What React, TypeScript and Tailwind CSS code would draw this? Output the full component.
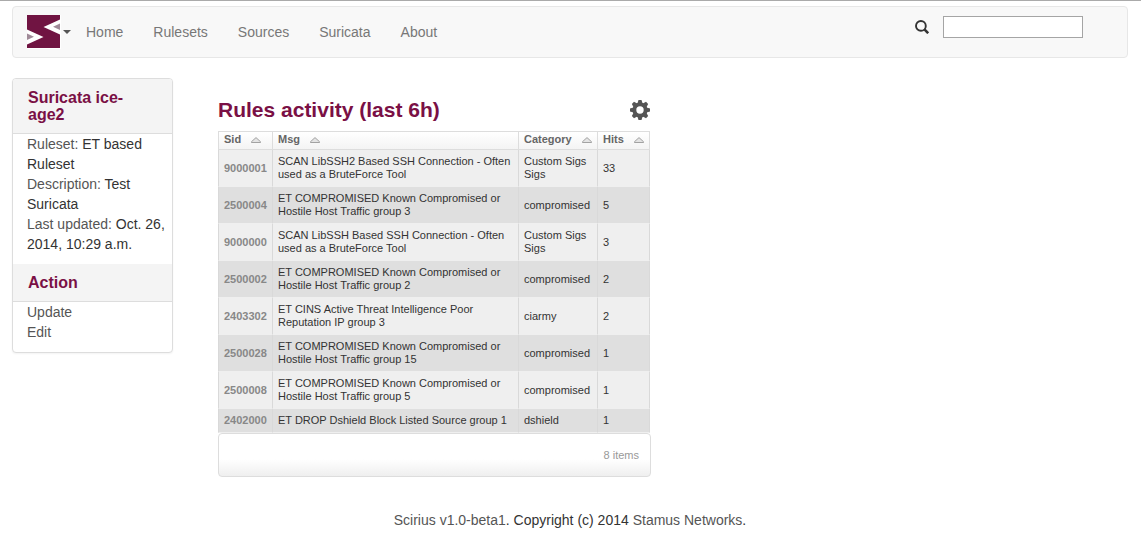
import React from "react";

type Rule = { sid: number; msg: string; category: string; hits: number };

const rules: Rule[] = [
  { sid: 9000001, msg: "SCAN LibSSH2 Based SSH Connection - Often used as a BruteForce Tool", category: "Custom Sigs Sigs", hits: 33 },
  { sid: 2500004, msg: "ET COMPROMISED Known Compromised or Hostile Host Traffic group 3", category: "compromised", hits: 5 },
  { sid: 9000000, msg: "SCAN LibSSH Based SSH Connection - Often used as a BruteForce Tool", category: "Custom Sigs Sigs", hits: 3 },
  { sid: 2500002, msg: "ET COMPROMISED Known Compromised or Hostile Host Traffic group 2", category: "compromised", hits: 2 },
  { sid: 2403302, msg: "ET CINS Active Threat Intelligence Poor Reputation IP group 3", category: "ciarmy", hits: 2 },
  { sid: 2500028, msg: "ET COMPROMISED Known Compromised or Hostile Host Traffic group 15", category: "compromised", hits: 1 },
  { sid: 2500008, msg: "ET COMPROMISED Known Compromised or Hostile Host Traffic group 5", category: "compromised", hits: 1 },
  { sid: 2402000, msg: "ET DROP Dshield Block Listed Source group 1", category: "dshield", hits: 1 },
];

const navLinks = ["Home", "Rulesets", "Sources", "Suricata", "About"];

function Logo() {
  return (
    <svg width="34" height="34" viewBox="0 0 34 34" aria-hidden="true">
      <rect width="34" height="34" fill="#fff" />
      <rect width="33" height="33" fill="#701442" />
      <path d="M33 4.500 16.500 12 33 19.500ZM0 14.500 16.500 22 0 29.500Z" fill="#fff" />
      <path d="M33 8.500 26 11.700 33 15ZM0 18.500 7 21.700 0 25Z" fill="#a08a98" />
    </svg>
  );
}

function SearchIcon() {
  return (
    <svg width="14" height="14" viewBox="0 0 14 14" fill="none" stroke="#333" aria-hidden="true">
      <circle cx="5.900" cy="5.900" r="4.900" strokeWidth="1.900" />
      <path d="M9.200 9.200 13.200 13.200" strokeWidth="2.600" />
    </svg>
  );
}

function GearIcon() {
  return (
    <svg width="20" height="20" viewBox="-10 -10 20 20" fill="#555" aria-hidden="true">
      <circle r="5.600" fill="none" stroke="#555" strokeWidth="3.800" />
      {[0, 45, 90, 135, 180, 225, 270, 315].map((angle) => (
        <path key={angle} d="M-2.600-6.500-1.500-10H1.500L2.600-6.500Z" transform={`rotate(${angle})`} />
      ))}
    </svg>
  );
}

function SortIcon() {
  return (
    <svg width="10" height="6" viewBox="0 0 10 6" aria-hidden="true">
      <path d="M.5 5.500V4.700L5 .6 9.500 4.700V5.500Z" fill="#e4e4e4" stroke="#999" strokeWidth=".9" />
    </svg>
  );
}

function PanelHeading({ children }: { children: React.ReactNode }) {
  return (
    <h2 className="border-b border-[#ddd] bg-[#f4f4f4] px-[15px] py-[10px] text-[16px] leading-[17px] font-bold text-[#7a1045]">
      {children}
    </h2>
  );
}

function HeaderCell({ label, className }: { label: string; className: string }) {
  return (
    <th className={`h-[19px] border-y border-l border-[#ddd] bg-linear-to-b from-white to-[#f4f4f4] px-[5px] pt-0 pb-[2px] text-left last:border-r ${className}`}>
      <a href="#sort" className="flex items-center gap-[10px] leading-[15px] font-bold text-[#666]">
        {label}
        <SortIcon />
      </a>
    </th>
  );
}

export default function App() {
  return (
    <div className="border-t border-[#aaa] bg-white pt-[5px] pr-[13px] pb-3 pl-3 font-['Liberation_Sans',Arial,sans-serif] text-[14px] leading-[20px] text-[#333]">
      <nav className="flex h-[52px] items-start justify-between rounded-[4px] border border-[#e7e7e7] bg-[#f8f8f8]">
        <div className="flex h-full items-center">
          <button type="button" aria-label="Menu" className="ml-[14px] flex items-center gap-[2px]">
            <Logo />
            <svg width="8" height="4" viewBox="0 0 8 4" aria-hidden="true">
              <path d="M0 0H8L4 4Z" fill="#555" />
            </svg>
          </button>
          <ul className="flex">
            {navLinks.map((link) => (
              <li key={link}>
                <a href={`#${link.toLowerCase()}`} className="block px-[15px] py-[15px] text-[#777]">{link}</a>
              </li>
            ))}
          </ul>
        </div>
        <form className="mt-[9px] mr-[44px] flex gap-[14px]">
          <label htmlFor="search" aria-label="Search" className="pt-1"><SearchIcon /></label>
          <input id="search" type="text" className="h-[22px] w-[140px] border border-[#a5a5a5] bg-white px-1 outline-none" />
        </form>
      </nav>

      <div className="mt-5 grid grid-cols-[161px_minmax(0,433px)] items-start gap-[45px]">
        <aside className="overflow-hidden rounded-[4px] border border-[#ddd] bg-white shadow-xs">
          <PanelHeading>Suricata ice-age2</PanelHeading>
          <div className="pr-1 pb-[10px] pl-[14px]">
            <p><a href="#ruleset" className="text-[#555]">Ruleset:</a> ET based Ruleset</p>
            <p><span className="text-[#555]">Description:</span> Test Suricata</p>
            <p><span className="text-[#555]">Last updated:</span> Oct. 26, 2014, 10:29 a.m.</p>
          </div>
          <PanelHeading>Action</PanelHeading>
          <ul className="pb-[10px] pl-[14px] text-[#555]">
            <li><a href="#update">Update</a></li>
            <li><a href="#edit">Edit</a></li>
          </ul>
        </aside>

        <main className="pt-5">
          <div className="flex items-center justify-between pr-px">
            <h1 className="text-[21px] leading-[24px] font-bold text-[#7a1045]">Rules activity (last 6h)</h1>
            <button type="button" aria-label="Settings"><GearIcon /></button>
          </div>
          <div className="mt-[9px] text-[11px] leading-[13px]">
            <div className="pr-px">
              <table className="w-full table-fixed border-separate border-spacing-0">
                <thead>
                  <tr>
                    <HeaderCell label="Sid" className="w-[54px]" />
                    <HeaderCell label="Msg" className="" />
                    <HeaderCell label="Category" className="w-[79px]" />
                    <HeaderCell label="Hits" className="w-[53px]" />
                  </tr>
                </thead>
                <tbody className="[&_td]:border-b [&_td]:border-l [&_td]:border-[#d9d9d9] [&_td]:border-b-[#efefef] [&_td]:p-[5px] [&_td:last-child]:border-r">
                  {rules.map((rule) => (
                    <tr key={rule.sid} className="odd:bg-[#efefef] even:bg-[#dfdfdf]">
                      <td><a href={`#rule-${rule.sid}`} className="font-bold text-[#888]">{rule.sid}</a></td>
                      <td>{rule.msg}</td>
                      <td>{rule.category}</td>
                      <td>{rule.hits}</td>
                    </tr>
                  ))}
                </tbody>
              </table>
            </div>
            <div className="flex h-[44px] items-center justify-end rounded-[4px] border border-[#ddd] bg-linear-to-b from-white from-60% to-[#efefef] px-[11px] text-[#999]">
              8 items
            </div>
          </div>
        </main>
      </div>

      <footer className="mt-[33px] text-center">
        <a href="#scirius" className="text-[#555]">Scirius v1.0-beta1</a>. Copyright (c) 2014 <a href="#stamus" className="text-[#555]">Stamus Networks</a>.
      </footer>
    </div>
  );
}
